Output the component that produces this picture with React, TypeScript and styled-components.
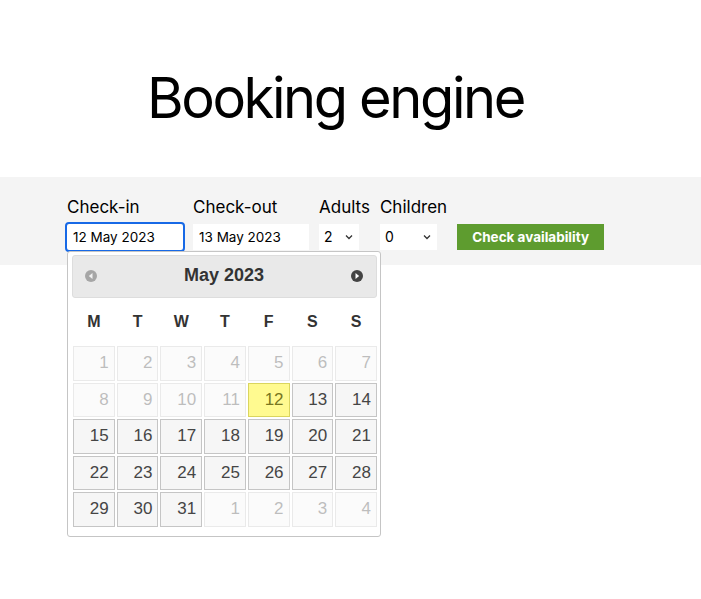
import React from "react";
import styled, { createGlobalStyle, css } from "styled-components";

const GlobalStyle = createGlobalStyle`
  html, body { margin: 0; padding: 0; background: #fff; }
  body { font-family: Inter, "Noto Sans", sans-serif; color: #000; }
  * { box-sizing: border-box; }
`;

const Page = styled.div`
  width: 701px;
  min-height: 599px;
  position: relative;
`;

const Title = styled.h1`
  margin: 0;
  padding: 64px 0 0 147px;
  height: 177px;
  font-family: Inter, sans-serif;
  font-weight: 400;
  font-size: 56px;
  letter-spacing: -2.4px;
  line-height: 68px;
`;

const Band = styled.div`
  background: #f4f4f4;
  height: 88px;
  padding: 20px 0 0 67px;
`;

const Bar = styled.div`
  display: flex;
  align-items: flex-end;
  gap: 10px;
`;

const Field = styled.div`
  display: flex;
  flex-direction: column;
  gap: 6px;
`;

const Label = styled.label`
  font-size: 17px;
  line-height: 21px;
  color: #000;
  white-space: nowrap;
`;

const TextInput = styled.div<{ $focused?: boolean }>`
  width: 116px;
  height: 26px;
  background: #fff;
  font-size: 13.5px;
  line-height: 26px;
  padding-left: 6px;
  color: #000;
  ${(p) =>
    p.$focused &&
    css`
      outline: 2px solid #1769e6;
      outline-offset: 0px;
      border-radius: 2px;
    `}
`;

const SelectBox = styled.div<{ $w: number }>`
  width: ${(p) => p.$w}px;
  height: 26px;
  background: #fff;
  font-size: 14px;
  line-height: 26px;
  padding-left: 5px;
  position: relative;
`;

const Chevron = styled.svg`
  position: absolute;
  right: 6px;
  top: 10px;
`;

const Button = styled.button`
  height: 26px;
  width: 147px;
  border: none;
  background: #5e9c2f;
  color: #fff;
  font-family: Inter, sans-serif;
  font-weight: 700;
  font-size: 13.5px;
  padding: 0;
`;

/* Datepicker */
const Picker = styled.div`
  position: absolute;
  left: 67px;
  top: 251px;
  width: 314px;
  border: 1px solid #c5c5c5;
  border-radius: 3px;
  background: #fff;
  padding: 3px 3px 9px 4px;
  font-family: "Liberation Sans", Arial, sans-serif;
  color: #333;
`;

const Header = styled.div`
  height: 43px;
  border: 1px solid #ddd;
  background: #e9e9e9;
  border-radius: 3px;
  display: flex;
  align-items: center;
  justify-content: space-between;
  padding: 0 13px 2px 12px;
  color: #333;
`;

const MonthTitle = styled.div`
  font-weight: 700;
  font-size: 18px;
`;

const NavIcon = styled.svg<{ $disabled?: boolean }>`
  opacity: ${(p) => (p.$disabled ? 0.4 : 1)};
`;

const Grid = styled.div`
  display: grid;
  grid-template-columns: repeat(7, 1fr);
  column-gap: 2px;
  row-gap: 2px;
  padding: 0 0 0 1px;
`;

const DayName = styled.div`
  height: 46px;
  display: flex;
  align-items: center;
  justify-content: center;
  font-weight: 700;
  font-size: 16px;
  color: #333;
  padding-top: 1px;
`;

const Cell = styled.div<{ $kind: "default" | "disabled" | "active" }>`
  height: 34.5px;
  border: 1px solid #c5c5c5;
  background: #f6f6f6;
  color: #454545;
  font-size: 17px;
  line-height: 32px;
  text-align: right;
  padding-right: 5px;
  ${(p) =>
    p.$kind === "disabled" &&
    css`
      opacity: 0.35;
    `}
  ${(p) =>
    p.$kind === "active" &&
    css`
      border-color: #dad55e;
      background: #fffa90;
      color: #777620;
    `}
`;

const dayNames = ["M", "T", "W", "T", "F", "S", "S"];

type Day = { n: number; kind: "default" | "disabled" | "active" };
const days: Day[] = [];
for (let i = 1; i <= 31; i++) {
  days.push({ n: i, kind: i < 12 ? "disabled" : i === 12 ? "active" : "default" });
}
for (let i = 1; i <= 4; i++) days.push({ n: i, kind: "disabled" });

const ChevronIcon = () => (
  <Chevron width="8" height="6" viewBox="0 0 8 6">
    <path d="M1 1.5 L4 4.5 L7 1.5" fill="none" stroke="#333" strokeWidth="1.3" />
  </Chevron>
);

export default function App() {
  return (
    <Page>
      <GlobalStyle />
      <Title>Booking engine</Title>
      <Band>
        <Bar>
          <Field>
            <Label>Check-in</Label>
            <TextInput $focused>12 May 2023</TextInput>
          </Field>
          <Field>
            <Label>Check-out</Label>
            <TextInput>13 May 2023</TextInput>
          </Field>
          <Field>
            <Label>Adults</Label>
            <SelectBox $w={40}>
              2
              <ChevronIcon />
            </SelectBox>
          </Field>
          <Field>
            <Label>Children</Label>
            <SelectBox $w={57}>
              0
              <ChevronIcon />
            </SelectBox>
          </Field>
          <Button>Check availability</Button>
        </Bar>
      </Band>
      <Picker>
        <Header>
          <NavIcon $disabled width="12" height="12" viewBox="0 0 12 12">
            <circle cx="6" cy="6" r="6" fill="#444" />
            <path d="M7.5 3 L3.8 6 L7.5 9 Z" fill="#fff" />
          </NavIcon>
          <MonthTitle>May 2023</MonthTitle>
          <NavIcon width="12" height="12" viewBox="0 0 12 12">
            <circle cx="6" cy="6" r="6" fill="#444" />
            <path d="M4.5 3 L8.2 6 L4.5 9 Z" fill="#fff" />
          </NavIcon>
        </Header>
        <Grid>
          {dayNames.map((d, i) => (
            <DayName key={i}>{d}</DayName>
          ))}
          {days.map((d, i) => (
            <Cell key={i} $kind={d.kind}>
              {d.n}
            </Cell>
          ))}
        </Grid>
      </Picker>
    </Page>
  );
}
